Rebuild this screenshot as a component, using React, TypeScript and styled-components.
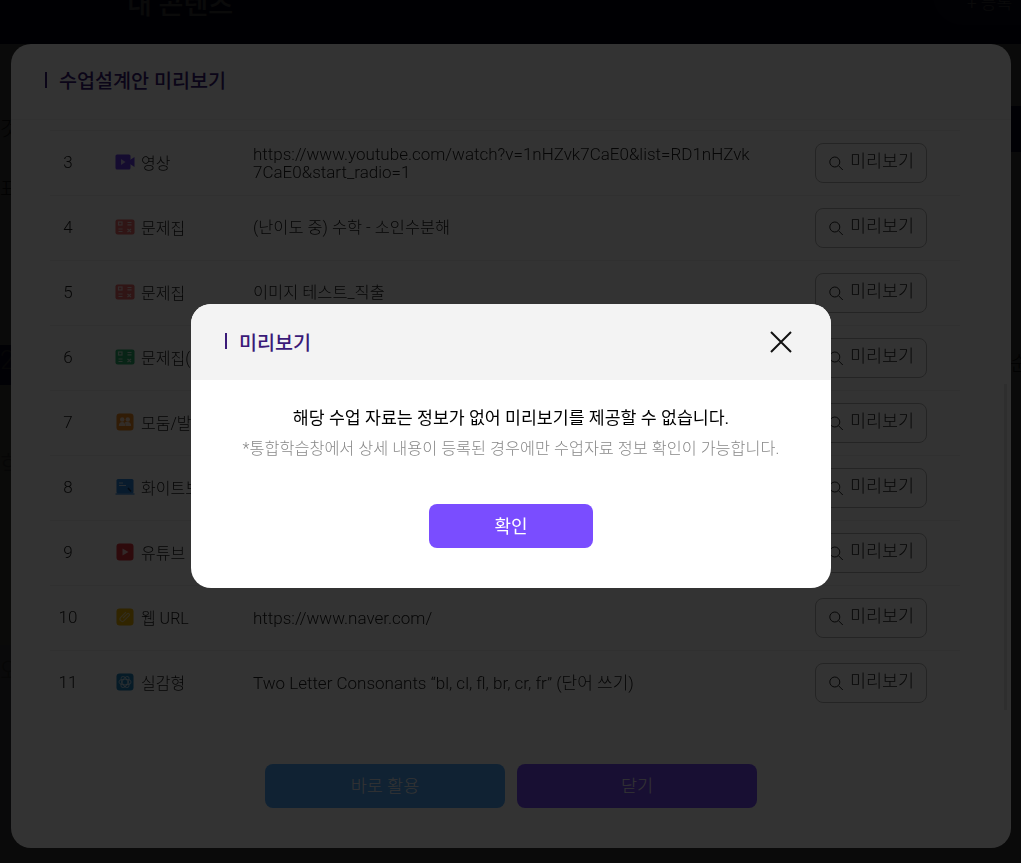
import React from "react";
import styled, { createGlobalStyle } from "styled-components";

const GlobalStyle = createGlobalStyle`
  * {
    box-sizing: border-box;
  }

  html, body {
    margin: 0;
    height: 100%;
    overflow: hidden;
  }

  body {
    font-family: Roboto, "Noto Sans CJK KR", sans-serif;
    font-weight: 300;
    background: #ffffff;
    color: #222222;
  }
`;

type Kind = "video" | "quizRed" | "quizGreen" | "group" | "board" | "youtube" | "link" | "real";

interface Material {
  no: number;
  kind: Kind;
  label: string;
  content: string;
  hangul?: boolean;
}

const materials: Material[] = [
  { no: 3, kind: "video", label: "영상", content: "https://www.youtube.com/watch?v=1nHZvk7CaE0&list=RD1nHZvk7CaE0&start_radio=1" },
  { no: 4, kind: "quizRed", label: "문제집", content: "(난이도 중) 수학 - 소인수분해", hangul: true },
  { no: 5, kind: "quizRed", label: "문제집", content: "이미지 테스트_직출", hangul: true },
  { no: 6, kind: "quizGreen", label: "문제집(", content: "" },
  { no: 7, kind: "group", label: "모둠/발표", content: "" },
  { no: 8, kind: "board", label: "화이트보드", content: "" },
  { no: 9, kind: "youtube", label: "유튜브", content: "" },
  { no: 10, kind: "link", label: "웹 URL", content: "https://www.naver.com/" },
  { no: 11, kind: "real", label: "실감형", content: "Two Letter Consonants “bl, cl, fl, br, cr, fr” (단어 쓰기)" },
];

function QuizGlyph({ color }: { color: string }) {
  return (
    <svg width="20" height="20" viewBox="0 0 20 20">
      <rect x="0.5" y="2.5" width="19" height="15" rx="2" fill={color} />
      <g fill="none" stroke="#ffffff" strokeOpacity="0.75" strokeWidth="1.2">
        <rect x="3.5" y="5" width="3.5" height="3" />
        <path d="M12.5 5.5h4M12.5 7.8h4M3.5 12h4M3.5 14.5h4M12.5 12l3.5 3M16 12l-3.5 3" />
      </g>
    </svg>
  );
}

function TypeIcon({ kind }: { kind: Kind }) {
  switch (kind) {
    case "video":
      return (
        <svg width="20" height="20" viewBox="0 0 20 20">
          <rect x="0.5" y="2.5" width="15" height="15" rx="1.5" fill="#6a3df0" />
          <path d="M15 8l4.5-3v10L15 12z" fill="#6a3df0" />
          <path d="M6 7l4.5 3L6 13z" fill="#ffffff" fillOpacity="0.7" />
        </svg>
      );
    case "quizRed":
      return <QuizGlyph color="#ef6b6b" />;
    case "quizGreen":
      return <QuizGlyph color="#2cb56e" />;
    case "group":
      return (
        <svg width="20" height="20" viewBox="0 0 20 20">
          <rect x="1.5" y="1.5" width="17" height="17" rx="3" fill="#f58a1f" />
          <g fill="#ffffff" fillOpacity="0.75">
            <circle cx="7.2" cy="7.5" r="2.2" />
            <circle cx="12.8" cy="7.5" r="2.2" />
            <path d="M3.8 14c0-2.6 1.4-4 3.4-4s3 1.2 3 4zM10.6 14c0-1.6-.2-2.8-1-3.6.8-.4 2-.4 3.2-.4 2 0 3.4 1.4 3.4 4z" />
          </g>
        </svg>
      );
    case "board":
      return (
        <svg width="20" height="20" viewBox="0 0 20 20">
          <rect x="1.5" y="2" width="17" height="14.5" rx="1.5" fill="#2b86e0" />
          <path d="M0.5 17h19" stroke="#2b86e0" strokeWidth="1.2" />
          <path d="M4 6h4M4 8.5h7" stroke="#ffffff" strokeOpacity="0.75" strokeWidth="1.2" />
          <path d="M13 11l3 3.5" stroke="#123a66" strokeWidth="1.6" />
        </svg>
      );
    case "youtube":
      return (
        <svg width="20" height="20" viewBox="0 0 20 20">
          <rect x="1.5" y="1.5" width="17" height="17" rx="3" fill="#e5323c" />
          <path d="M7.5 6.5l6 3.5-6 3.5z" fill="#ffffff" fillOpacity="0.75" />
        </svg>
      );
    case "link":
      return (
        <svg width="20" height="20" viewBox="0 0 20 20">
          <rect x="1.5" y="1.5" width="17" height="17" rx="3" fill="#f5b800" />
          <path
            d="M8 12.5l4.2-4.2a1.3 1.3 0 0 1 1.9 1.9l-5 5a2.4 2.4 0 0 1-3.4-3.4l5.2-5.2"
            transform="translate(0 -1.5)"
            fill="none"
            stroke="#ffffff"
            strokeOpacity="0.6"
            strokeWidth="1.1"
          />
        </svg>
      );
    case "real":
      return (
        <svg width="20" height="20" viewBox="0 0 20 20">
          <rect x="1.5" y="1.5" width="17" height="17" rx="3" fill="#1f86c4" />
          <g fill="none" stroke="#ffffff" strokeOpacity="0.6" strokeWidth="1.1">
            <ellipse cx="10" cy="10" rx="6" ry="2.8" />
            <ellipse cx="10" cy="10" rx="6" ry="2.8" transform="rotate(60 10 10)" />
            <ellipse cx="10" cy="10" rx="6" ry="2.8" transform="rotate(120 10 10)" />
          </g>
        </svg>
      );
  }
}

function SearchIcon() {
  return (
    <svg width="16" height="16" viewBox="0 0 16 16" fill="none" stroke="#222222" strokeWidth="1">
      <circle cx="6.8" cy="7" r="5" />
      <path d="M10.5 10.7l4.3 4.3" />
    </svg>
  );
}

function App() {
  return (
    <>
      <GlobalStyle />
      <Page>
        <TopBar>
          <PageTitle>내 콘텐츠</PageTitle>
          <TopActions>+ 등록</TopActions>
        </TopBar>
        <PageBody>
          <SideStrip>
            <StripGap $h={98}>것</StripGap>
            <StripGap $h={60}>표</StripGap>
            <StripGap $h={116} />
            <StripBand $h={27} $color="#ffffff" />
            <StripBand $h={40} $color="#2a1a8c">2</StripBand>
            <StripBand $h={260} $color="#fff8e0" $pad={60}>학</StripBand>
            <StripBand $h={195} $color="#eaeefc" $pad={6}>와</StripBand>
          </SideStrip>
          <SideStrip>
            <StripGap $h={62} />
            <StripBand $h={46} $color="#2a1a8c" />
            <StripGap $h={225}>순</StripGap>
          </SideStrip>
        </PageBody>
      </Page>

      <Overlay $top={44} $left={11} $right={10}>
        <PlanModal>
          <PlanHeader>
            <TitleMark />
            <PlanTitle>수업설계안 미리보기</PlanTitle>
          </PlanHeader>
          <PlanBody>
            {materials.map((item) => (
              <Row key={item.no}>
                <NoCell>{item.no}</NoCell>
                <TypeCell>
                  <TypeIcon kind={item.kind} />
                  <span>{item.label}</span>
                </TypeCell>
                <ContentCell $hangul={item.hangul}>{item.content}</ContentCell>
                <PreviewButton>
                  <SearchIcon />
                  <PreviewLabel>미리보기</PreviewLabel>
                </PreviewButton>
              </Row>
            ))}
            <ScrollThumb />
          </PlanBody>
          <PlanFooter>
            <FooterButton $color="#50a8ff">바로 활용</FooterButton>
            <FooterButton $color="#7a4dff">닫기</FooterButton>
          </PlanFooter>
        </PlanModal>
      </Overlay>

      <Overlay $top={304} $left={11} $right={10}>
        <Dialog>
          <DialogHeader>
            <DialogTitleWrap>
              <DialogMark />
              <DialogTitle>미리보기</DialogTitle>
            </DialogTitleWrap>
            <CloseButton aria-label="닫기">
              <svg width="22" height="22" viewBox="0 0 22 22" stroke="#111111" strokeWidth="2">
                <path d="M1 1l20 20M21 1L1 21" />
              </svg>
            </CloseButton>
          </DialogHeader>
          <DialogBody>
            <Message>해당 수업 자료는 정보가 없어 미리보기를 제공할 수 없습니다.</Message>
            <SubMessage>*통합학습창에서 상세 내용이 등록된 경우에만 수업자료 정보 확인이 가능합니다.</SubMessage>
            <ConfirmButton>확인</ConfirmButton>
          </DialogBody>
        </Dialog>
      </Overlay>
    </>
  );
}

export default App;

const Page = styled.div`
  height: 863px;
  display: flex;
  flex-direction: column;
`;
const TopBar = styled.div`
  height: 44px;
  flex: none;
  background: #14105c;
  display: flex;
  justify-content: space-between;
  overflow: hidden;
  padding: 0 0 0 127px;
  color: #ffffff;
`;
const PageTitle = styled.div`
  font-size: 27px;
  font-weight: 500;
  line-height: 20px;
  margin-top: -5px;
`;
const TopActions = styled.div`
  font-size: 17px;
  line-height: 16px;
  margin-top: -5px;
  padding: 0 0 0 34px;
  height: 30px;
  width: 88px;
  border-radius: 0 0 0 30px;
  background: #201a70;
`;
const PageBody = styled.div`
  flex: 1;
  display: flex;
  justify-content: space-between;
`;
const SideStrip = styled.div`
  width: 11px;
  overflow: hidden;
  display: flex;
  flex-direction: column;
`;
const StripGap = styled.div<{ $h: number }>`
  height: ${(p) => p.$h}px;
  font-size: 20px;
  color: #333333;
  display: flex;
  align-items: flex-end;
`;
const StripBand = styled.div<{ $h: number; $color: string; $pad?: number }>`
  height: ${(p) => p.$h}px;
  padding-top: ${(p) => p.$pad ?? 0}px;
  background: ${(p) => p.$color};
  color: #9a9a9a;
  font-size: 26px;
`;

const Overlay = styled.div<{ $top: number; $left: number; $right: number }>`
  position: fixed;
  inset: 0;
  background: rgba(0, 0, 0, 0.8);
  display: flex;
  align-items: flex-start;
  justify-content: center;
  padding: ${(p) => p.$top}px ${(p) => p.$right}px 0 ${(p) => p.$left}px;
`;
const PlanModal = styled.div`
  width: 1000px;
  height: 804px;
  flex: none;
  background: #ffffff;
  border-radius: 20px;
  display: flex;
  flex-direction: column;
`;
const PlanHeader = styled.div`
  height: 76px;
  flex: none;
  display: flex;
  align-items: center;
  gap: 12px;
  padding: 0 0 4px 34px;
  border-bottom: 1px solid #f6f6f6;
`;
const TitleMark = styled.span`
  width: 2px;
  height: 16px;
  background: #3a1a78;
`;
const PlanTitle = styled.h2`
  margin: 0;
  font-size: 19.6px;
  font-weight: 500;
  color: #3a1a78;
`;
const PlanBody = styled.div`
  position: relative;
  flex: none;
  padding: 10px 0 0 39px;
  height: 596px;
`;
const Row = styled.div`
  width: 910px;
  height: 65px;
  display: flex;
  align-items: center;
  border-top: 1px solid #eeeeee;
  font-size: 16px;
  &:last-of-type {
    border-bottom: 1px solid #eeeeee;
    height: 66px;
  }
`;
const NoCell = styled.div`
  width: 36px;
  margin-right: 29px;
  padding-bottom: 2px;
  text-align: center;
  font-size: 17px;
`;
const TypeCell = styled.div`
  width: 138px;
  flex: none;
  display: flex;
  align-items: center;
  gap: 6px;
  padding-bottom: 2px;
`;
const ContentCell = styled.div<{ $hangul?: boolean }>`
  width: 562px;
  flex: none;
  padding-right: 57px;
  font-size: ${(p) => (p.$hangul ? "16.4px" : "17px")};
  line-height: 18px;
  word-break: break-all;
`;
const PreviewButton = styled.button`
  width: 112px;
  height: 40px;
  flex: none;
  background: #ffffff;
  border: 1px solid #b4b4b4;
  border-radius: 8px;
  display: flex;
  align-items: center;
  justify-content: center;
  gap: 6px;
  padding: 0;
  font: inherit;
  color: #222222;
`;
const PreviewLabel = styled.span`
  font-size: 17.4px;
  line-height: 16px;
  margin-top: -4px;
`;
const ScrollThumb = styled.div`
  position: absolute;
  right: 4px;
  top: 264px;
  width: 3px;
  height: 326px;
  background: #e4e4e4;
`;
const PlanFooter = styled.div`
  flex: 1;
  display: flex;
  justify-content: center;
  gap: 12px;
  padding-top: 48px;
`;
const FooterButton = styled.button<{ $color: string }>`
  width: 240px;
  height: 44px;
  border: 0;
  border-radius: 8px;
  background: ${(p) => p.$color};
  color: #ffffff;
  font: inherit;
  font-size: 17.5px;
  padding: 0 0 3px;
`;

const Dialog = styled.div`
  width: 640px;
  height: 284px;
  flex: none;
  background: #ffffff;
  border-radius: 20px;
  overflow: hidden;
  display: flex;
  flex-direction: column;
`;
const DialogHeader = styled.div`
  height: 76px;
  flex: none;
  background: #f3f3f3;
  display: flex;
  align-items: center;
  justify-content: space-between;
  padding: 0 39px 0 34px;
`;
const DialogTitleWrap = styled.div`
  display: flex;
  align-items: center;
  gap: 12px;
  padding-bottom: 2px;
`;
const DialogMark = styled.span`
  width: 2px;
  height: 16px;
  background: #3a1a78;
`;
const DialogTitle = styled.h3`
  margin: 0;
  font-size: 19.6px;
  font-weight: 500;
  color: #3a1a78;
`;
const CloseButton = styled.button`
  background: none;
  border: 0;
  padding: 0;
  display: flex;
`;
const DialogBody = styled.div`
  flex: 1;
  display: flex;
  flex-direction: column;
  align-items: center;
  padding-top: 25px;
`;
const Message = styled.p`
  margin: 0;
  font-size: 17.3px;
  font-weight: 400;
  line-height: 26px;
  color: #000000;
`;
const SubMessage = styled.p`
  margin: 6px 0 0;
  font-size: 16.3px;
  line-height: 24px;
  color: #888888;
`;
const ConfirmButton = styled.button`
  width: 164px;
  height: 44px;
  margin-top: 43px;
  border: 0;
  border-radius: 8px;
  background: #7a4dff;
  color: #ffffff;
  font: inherit;
  font-weight: 400;
  font-size: 18px;
  padding: 0 0 3px;
`;
